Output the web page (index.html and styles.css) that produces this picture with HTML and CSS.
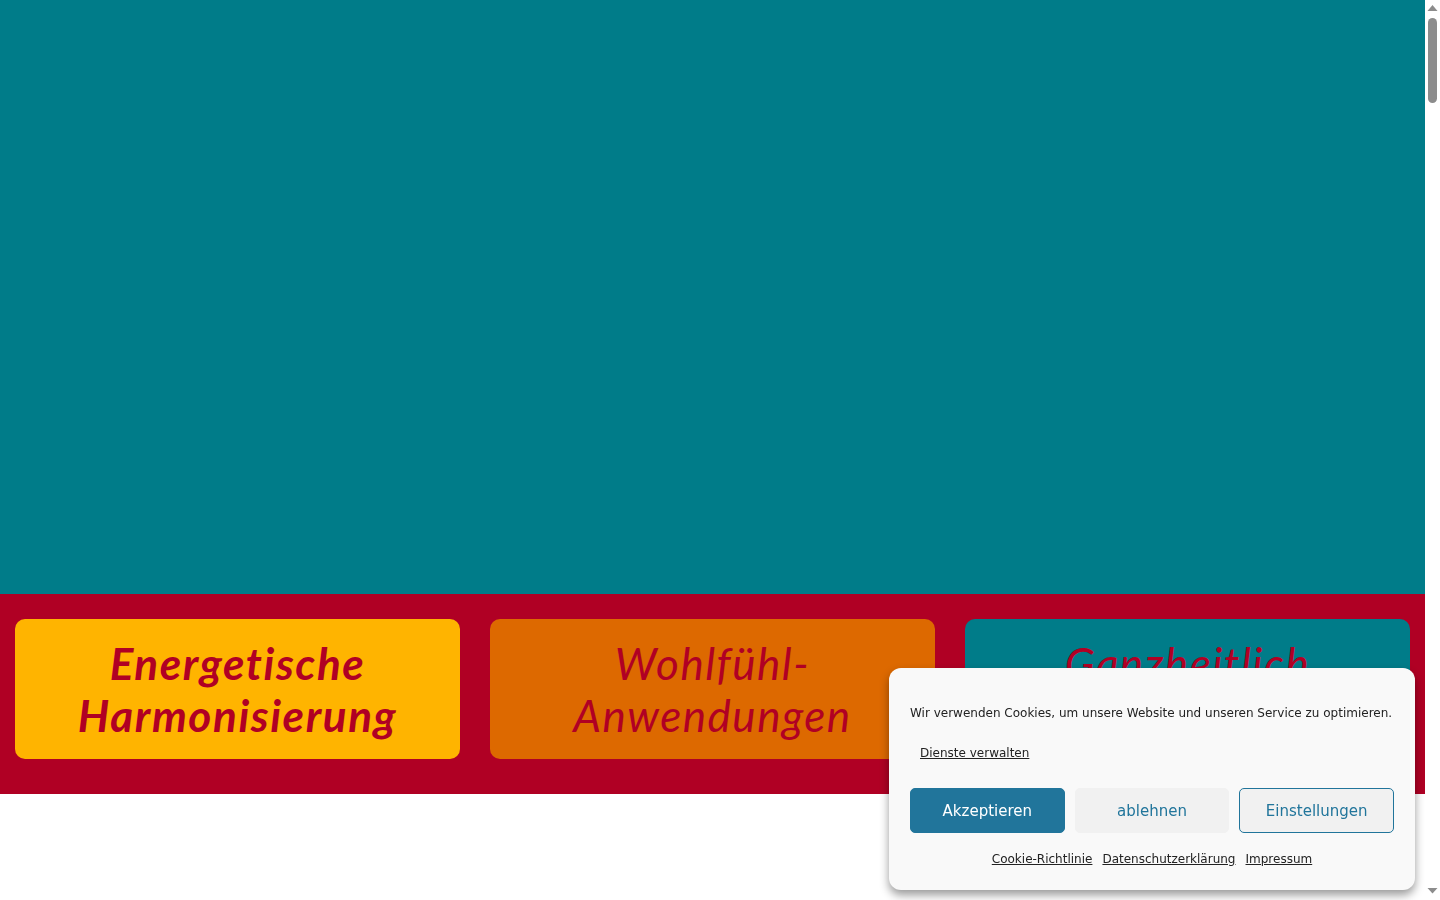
FILE: index.html
```html
<!DOCTYPE html>
<html lang="de">
<head>
<meta charset="utf-8">
<title>Energetische Harmonisierung</title>
<link rel="stylesheet" href="styles.css">
</head>
<body>
<main class="page">
  <section class="hero"></section>
  <section class="band">
    <a class="card card-amber"><h2 class="strong">Energetische Harmonisierung</h2></a>
    <a class="card card-orange"><h2>Wohlfühl-<br>Anwendungen</h2></a>
    <a class="card card-teal"><h2>Ganzheitlich</h2></a>
  </section>
</main>
<div class="scrollbar">
  <svg class="arrow" viewBox="0 0 15 15" width="15" height="15"><path d="M2.5 11 7.5 5 12.5 11Z"/></svg>
  <div class="track"><div class="thumb"></div></div>
  <svg class="arrow" viewBox="0 0 15 15" width="15" height="15"><path d="M2.5 3 7.5 8.5 12.5 3Z"/></svg>
</div>
<aside class="cookie">
  <p class="msg">Wir verwenden Cookies, um unsere Website und unseren Service zu optimieren.</p>
  <a class="manage" href="#">Dienste verwalten</a>
  <div class="buttons">
    <button class="btn accept">Akzeptieren</button>
    <button class="btn deny">ablehnen</button>
    <button class="btn prefs">Einstellungen</button>
  </div>
  <nav class="links">
    <a href="#">Cookie-Richtlinie</a>
    <a href="#">Datenschutzerklärung</a>
    <a href="#">Impressum</a>
  </nav>
</aside>
</body>
</html>
```
FILE: styles.css
```css
html, body { height: 100%; overflow: hidden; }
body { margin: 0; display: flex; background: #fff; font-family: "DejaVu Sans", sans-serif; }
.page { flex: 1; min-width: 0; }
.hero { height: 594px; background: #007c89; }
.band {
  display: grid;
  grid-template-columns: repeat(3, 1fr);
  gap: 30px;
  padding: 25px 15px 35px;
  background: #b00024;
}
.card {
  height: 140px;
  border-radius: 10px;
  display: flex;
  justify-content: center;
  padding-top: 18px;
  box-sizing: border-box;
}
.card h2 {
  margin: 0;
  width: 380px;
  text-align: center;
  font: italic 400 44px/52px Lato, sans-serif;
  color: #b00024;
  letter-spacing: 1.5px;
}
.card h2.strong { font-weight: 700; letter-spacing: 1.6px; }
.card-amber { background: #ffb400; }
.card-orange { background: #dd6900; }
.card-teal { background: #007c89; }
.scrollbar {
  flex: 0 0 15px;
  display: flex;
  flex-direction: column;
  background: #fff;
}
.arrow { display: block; flex: none; fill: #8c8c8c; }
.track { flex: 1; padding-top: 3px; }
.thumb { width: 9px; height: 85px; margin-left: 3px; border-radius: 5px; background: #8c8c8c; }
.cookie {
  position: fixed;
  right: 25px;
  bottom: 10px;
  width: 526px;
  height: 222px;
  box-sizing: border-box;
  padding: 35px 21px 0;
  background: #f9f9f9;
  border-radius: 12px;
  box-shadow: 0 5px 10px rgba(0,0,0,.4);
  font-size: 12px;
  color: #222;
}
.msg { margin: 0; line-height: 20px; white-space: nowrap; }
.manage { display: inline-block; margin: 20px 0 0 10px; line-height: 20px; color: #222; }
.buttons { display: grid; grid-template-columns: repeat(3, 1fr); gap: 10px; margin-top: 25px; }
.btn {
  height: 45px;
  padding: 0;
  border-radius: 5px;
  border: 1px solid #f1f1f1;
  font: 15px "DejaVu Sans", sans-serif;
  background: #f1f1f1;
  color: #21759b;
}
.accept { background: #21759b; border-color: #21759b; color: #fff; }
.prefs { border-color: #21759b; }
.links { display: flex; justify-content: center; gap: 10px; margin-top: 16px; line-height: 20px; }
.links a { color: #222; }
```
